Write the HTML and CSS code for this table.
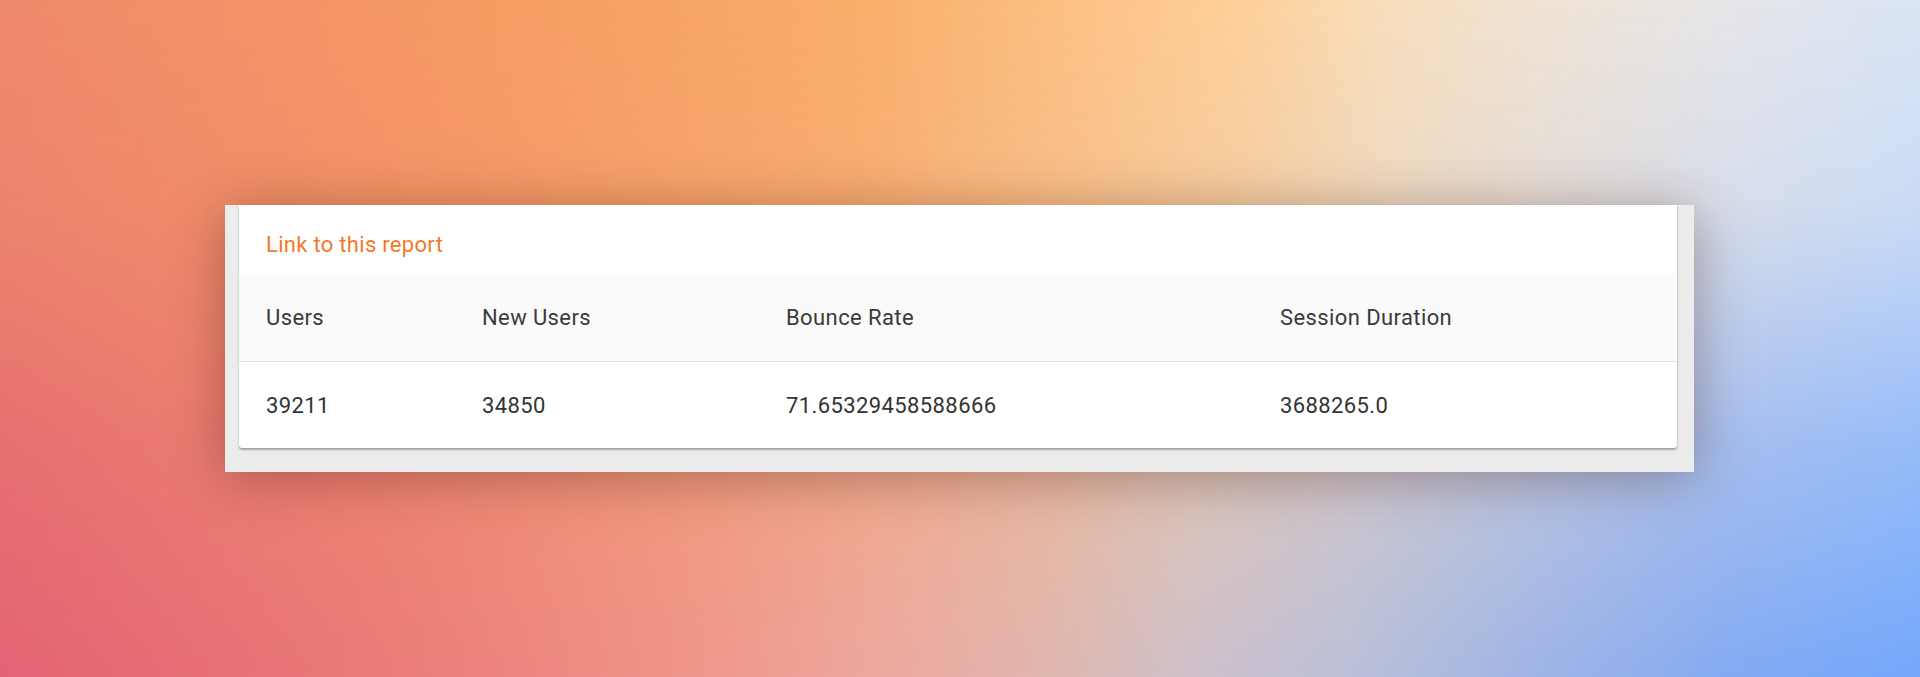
FILE: index.html
```html
<!DOCTYPE html>
<html lang="en">
<head>
<meta charset="utf-8">
<title>Report</title>
<link rel="stylesheet" href="styles.css">
</head>
<body>
<main class="stage">
  <section class="panel">
    <div class="card">
      <div class="link-row"><a class="report-link" href="#">Link to this report</a></div>
      <div class="table">
        <div class="row head">
          <div class="cell">Users</div>
          <div class="cell">New Users</div>
          <div class="cell">Bounce Rate</div>
          <div class="cell">Session Duration</div>
        </div>
        <div class="row body">
          <div class="cell">39211</div>
          <div class="cell">34850</div>
          <div class="cell">71.65329458588666</div>
          <div class="cell">3688265.0</div>
        </div>
      </div>
    </div>
  </section>
</main>
</body>
</html>
```

FILE: styles.css
```css
html, body {
  margin: 0;
  padding: 0;
  height: 100%;
}
body {
  font-family: Roboto, "Liberation Sans", Arial, sans-serif;
  background: linear-gradient(90deg, #e36373 0%, #eb7b78 20%, #ef9488 35%, #eea79c 45%, #dfb7b0 55%, #cfc1ca 62%, #bcc0d8 70%, #9fb5e6 80%, #84aaf2 90%, #74a8fb 100%);
  overflow: hidden;
}
.stage {
  position: relative;
  height: 677px;
  box-sizing: border-box;
  padding: 205px 0 0 225px;
  isolation: isolate;
}
.stage::before {
  content: "";
  position: absolute;
  inset: 0;
  z-index: -1;
  background: linear-gradient(90deg, #ee8a6c 0%, #f59b62 25%, #f9ae6a 45%, #fcc081 55%, #fdd09b 65%, #f8ddba 72%, #f0e3d3 80%, #e6e6e8 90%, #dae4f4 100%);
  -webkit-mask-image: linear-gradient(180deg, #000 0%, rgba(0,0,0,0.85) 30%, rgba(0,0,0,0.35) 65%, transparent 100%);
  mask-image: linear-gradient(180deg, #000 0%, rgba(0,0,0,0.85) 30%, rgba(0,0,0,0.35) 65%, transparent 100%);
}
.panel {
  width: 1469px;
  box-sizing: border-box;
  background: #ececec;
  padding: 0 17px 24px 14px;
  box-shadow: 0 6px 50px rgba(70, 30, 20, 0.38);
}
.card {
  background: #fff;
  border-radius: 0 0 3px 3px;
  box-shadow: 0 2px 2px rgba(0,0,0,0.3), 1px 0 2px rgba(0,0,0,0.06);
  overflow: hidden;
}
.link-row {
  height: 68px;
  display: flex;
  align-items: center;
  padding: 10px 0 0 27px;
  box-sizing: border-box;
}
.report-link {
  color: #f07a2a;
  text-decoration: none;
  font-size: 22px;
  letter-spacing: 0.3px;
}
.row {
  display: grid;
  grid-template-columns: 216px 304px 494px 1fr;
  align-items: center;
}
.row.head {
  height: 88px;
  background: #fafafa;
  border-bottom: 1px solid #e0e0e0;
  color: #3a3a3a;
}
.row.body {
  height: 86px;
  color: #333;
}
.cell {
  padding-left: 27px;
  font-size: 22px;
  letter-spacing: 0.4px;
}
```
